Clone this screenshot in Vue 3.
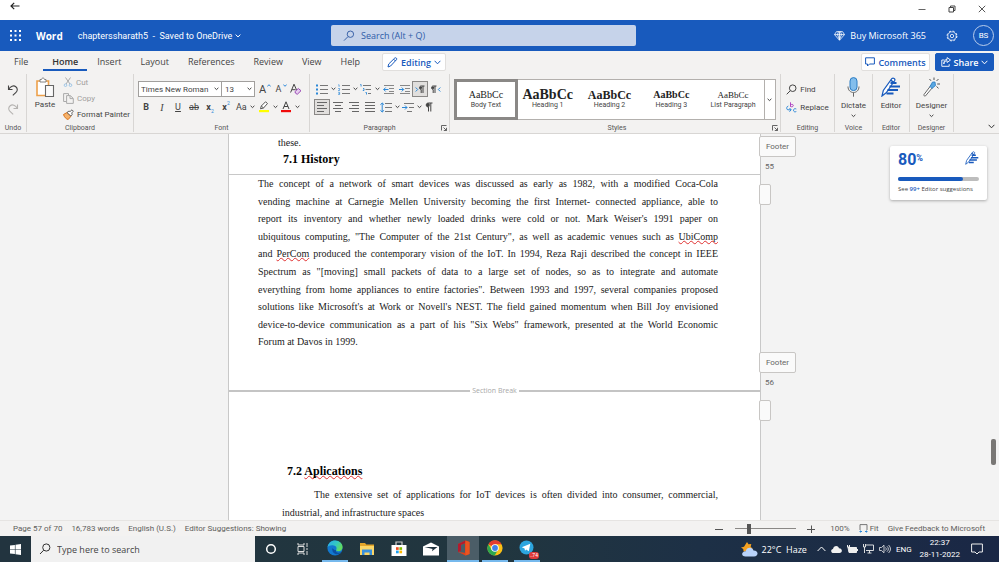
<script setup>
import { ref } from 'vue'

const tabs = ['File', 'Home', 'Insert', 'Layout', 'References', 'Review', 'View', 'Help']
const activeTab = ref('Home')
const zoom = ref(21)

const styleCards = [
  { name: 'Body Text', kind: 'plain' },
  { name: 'Heading 1', kind: 'large' },
  { name: 'Heading 2', kind: 'medium' },
  { name: 'Heading 3', kind: 'small' },
  { name: 'List Paragraph', kind: 'light' },
]
const activeStyle = ref('Body Text')

const historyLines = [
  'The concept of a network of smart devices was discussed as early as 1982, with a modified Coca-Cola',
  'vending machine at Carnegie Mellen University becoming the first Internet- connected appliance, able to',
  "report its inventory and whether newly loaded drinks were cold or not. Mark Weiser's 1991 paper on",
  'ubiquitous computing, "The Computer of the 21st Century", as well as academic venues such as |UbiComp|',
  'and |PerCom| produced the contemporary vision of the IoT. In 1994, Reza Raji described the concept in IEEE',
  'Spectrum as "[moving] small packets of data to a large set of nodes, so as to integrate and automate',
  'everything from home appliances to entire factories". Between 1993 and 1997, several companies proposed',
  "solutions like Microsoft's at Work or Novell's NEST. The field gained momentum when Bill Joy envisioned",
  'device-to-device communication as a part of his "Six Webs" framework, presented at the World Economic',
  'Forum at Davos in 1999.',
].map((line) => line.split('|'))

const pageMarks = ['55', '56']
</script>

<template>
  <div class="app">
    <div class="window-bar">
      <button class="bare" aria-label="Back">
        <svg width="10" height="8" viewBox="0 0 10 8"><path d="M9.5 4H1M4.2.8 1 4l3.200 3.200" fill="none" stroke="#222" stroke-width="1.200" /></svg>
      </button>
      <div class="window-controls">
        <button class="bare" aria-label="Minimize"><svg width="8" height="8" viewBox="0 0 8 8"><path d="M.5 4.500h7" stroke="#666" /></svg></button>
        <button class="bare" aria-label="Restore"><svg width="8" height="8" viewBox="0 0 8 8"><path d="M1 2.500h4.500V7H1zM2.500 2.500V1H7v4.500H5.500" fill="none" stroke="#444" /></svg></button>
        <button class="bare" aria-label="Close"><svg width="8" height="8" viewBox="0 0 8 8"><path d="m.8.800 6.400 6.400m0-6.400L.8 7.200" stroke="#444" stroke-width=".9" /></svg></button>
      </div>
    </div>

    <header class="title-bar">
      <div class="title-left">
        <button class="bare waffle" aria-label="App launcher">
          <svg width="11" height="11" viewBox="0 0 11 11" fill="#fff"><path d="M0 0h2v2H0zM4.500 0h2v2h-2zM9 0h2v2H9zM0 4.500h2v2H0zM4.500 4.500h2v2h-2zM9 4.500h2v2H9zM0 9h2v2H0zM4.500 9h2v2h-2zM9 9h2v2H9z" /></svg>
        </button>
        <strong class="brand">Word</strong>
        <button class="bare doc-name">chapterssharath5&nbsp; -&nbsp; Saved to OneDrive
          <svg width="6" height="4" viewBox="0 0 6 4"><path d="m.6.600 2.400 2.300L5.400.6" fill="none" stroke="#fff" /></svg>
        </button>
      </div>
      <label class="search">
        <svg width="12" height="12" viewBox="0 0 12 12"><circle cx="7.400" cy="4.200" r="3.200" fill="none" stroke="#3a62a8" /><path d="m5 6.600-4 4" stroke="#3a62a8" /></svg>
        <input type="text" placeholder="Search (Alt + Q)" aria-label="Search" />
      </label>
      <div class="title-right">
        <button class="bare buy">
          <svg width="11" height="10" viewBox="0 0 11 10"><path d="M2.500.6h6l2 3L5.500 9.300.5 3.600zM.5 3.600h10M5.500.6v8.500M3.500 3.600l2 5 2-5-1-3M3.500 3.600l1-3" fill="none" stroke="#fff" stroke-width=".8" /></svg>
          Buy Microsoft 365
        </button>
        <button class="bare" aria-label="Settings">
          <svg width="12" height="12" viewBox="0 0 12 12" fill="none" stroke="#fff"><circle cx="6" cy="6" r="4.900" stroke-width="1" stroke-dasharray="2.100 1.750" /><circle cx="6" cy="6" r="4.200" stroke-width=".7" /><circle cx="6" cy="6" r="1.700" stroke-width=".8" /></svg>
        </button>
        <button class="avatar">BS</button>
      </div>
    </header>

    <nav class="tab-row">
      <div class="tabs">
        <button v-for="t in tabs" :key="t" class="tab" :class="{ active: t === activeTab }" @click="activeTab = t">{{ t }}</button>
      </div>
      <button class="pill editing">
        <svg width="11" height="11" viewBox="0 0 11 11"><path d="M1 10l.7-3L7.800 1c1-.8 2.600.6 1.700 1.700L3.600 9zM6.700 2.200l1.800 1.800" fill="none" stroke="#185abd" /></svg>
        Editing
        <svg width="7" height="5" viewBox="0 0 7 5"><path d="m.6.800 2.900 3 2.900-3" fill="none" stroke="#185abd" /></svg>
      </button>
      <div class="tab-actions">
        <button class="pill comments">
          <svg width="10" height="10" viewBox="0 0 10 10"><path d="M.6.800h8.800v6.200H4.500L2.500 9V7H.6z" fill="none" stroke="#185abd" /></svg>
          Comments
        </button>
        <button class="pill share">
          <svg width="10" height="10" viewBox="0 0 10 10"><path d="M3.500 3H.8v6.300h7.400V7.200M2.800 7c.3-2.200 1.500-3.200 3.300-3.300V5.500L9.500 3 6.100.6v1.700C4 2.500 2.800 4.200 2.800 7z" fill="none" stroke="#fff" stroke-width=".9" /></svg>
          Share
          <svg width="7" height="5" viewBox="0 0 7 5"><path d="m.6.800 2.900 3 2.900-3" fill="none" stroke="#fff" /></svg>
        </button>
      </div>
    </nav>

    <svg class="defs" width="0" height="0" aria-hidden="true">
      <symbol id="chev" viewBox="0 0 5 4"><path d="m.6.800 1.900 1.800L4.400.8" fill="none" stroke="#444" /></symbol>
      <symbol id="launch" viewBox="0 0 6 6"><path d="M.5 5.500v-5h5M2.500 2.500l3 3m0-2.700v2.700H2.800" fill="none" stroke="#555" stroke-width=".9" /></symbol>
      <symbol id="pen-lines" viewBox="0 0 20 20"><path d="M1 19l1.300-5.500L11 1.500c1.200-1.200 3.600.4 2.700 2L5.200 15.800z" fill="#fff" stroke="#185abd" stroke-width="1.200" /><path d="M9.500 6h6M8.500 9.500H19M6.500 13H17M5.500 16.500h7" stroke="#185abd" stroke-width="2.200" /><path d="M9.500 3.200l3.800 2.500" stroke="#185abd" stroke-width="1.500" /></symbol>
    </svg>

    <section class="ribbon" aria-label="Ribbon">
      <div class="group undo">
        <div class="stack">
          <button class="tool" aria-label="Undo"><svg width="12" height="12" viewBox="0 0 12 12"><path d="M1.500 1.500v4h4M1.700 5.300C3.500 2.500 6.500.9 8.800 2.700c2.200 1.800 1.700 4.200.2 5.600L5.800 11.300" fill="none" stroke="#444" stroke-width="1.100" /></svg></button>
          <button class="tool" aria-label="Redo"><svg width="12" height="12" viewBox="0 0 12 12"><path d="M10.500 1.500v4h-4M10.300 5.300C8.500 2.500 5.500.9 3.200 2.700 1 4.500 1.500 6.900 3 8.300l3.200 3" fill="none" stroke="#b5b3b1" stroke-width="1.100" /></svg></button>
        </div>
        <span class="group-label">Undo</span>
      </div>

      <div class="group clipboard">
        <div class="group-body">
          <button class="big">
            <svg width="20" height="22" viewBox="0 0 20 22"><path d="M2 4h11.500v14.500H2z" fill="#fff" stroke="#eda04a" stroke-width="1.600" /><path d="M5 2.500h1.500C6.800.5 9.200.5 9.500 2.500H11V5H5z" fill="#fff" stroke="#777" stroke-width=".9" /><path d="M10.500 8.500h8v11h-8z" fill="#fafafa" stroke="#666" stroke-width="1.100" /></svg>
            Paste
          </button>
          <div class="clip-list">
            <button class="text-tool faded"><svg width="10" height="10" viewBox="0 0 10 10"><path d="M2.500.5 7 7M7.500.5 3 7" stroke="#aaa" fill="none" /><circle cx="2.500" cy="8.200" r="1.300" fill="none" stroke="#9cc4e6" /><circle cx="7.500" cy="8.200" r="1.300" fill="none" stroke="#9cc4e6" /></svg>Cut</button>
            <button class="text-tool faded"><svg width="11" height="11" viewBox="0 0 11 11"><path d="M3.500 8.500H.6V.6h4.900v1.800M3.600 2.600h3.700l3 2.800v5H3.600zM7 2.800v2.800h3" fill="none" stroke="#aaa" /></svg>Copy</button>
            <button class="text-tool"><svg width="11" height="11" viewBox="0 0 11 11"><path d="M.5 5.500 4 3.500l4 3.700L5.200 10.500c-2-.3-4-2.500-4.700-5z" fill="#f6b26b" stroke="#d8741c" /><path d="M4 3.500 6 2l1 .6L9 .8l1.300 1.400L8.700 4l.5 1.400-1.300 1.700z" fill="#fff" stroke="#555" stroke-width=".9" /></svg>Format Painter</button>
          </div>
        </div>
        <span class="group-label">Clipboard</span>
      </div>

      <div class="group font">
        <div class="rows">
          <div class="row">
            <span class="combo wide"><select aria-label="Font"><option>Times New Roman</option></select><svg width="5" height="4"><use href="#chev" /></svg></span>
            <span class="combo narrow"><select aria-label="Font size"><option>13</option></select><svg width="5" height="4"><use href="#chev" /></svg></span>
            <div class="row sizes">
              <button class="tool" aria-label="Grow font"><span class="letter big-a">A</span><svg class="sup" width="4" height="3" viewBox="0 0 4 3"><path d="M.3 2.500 2 .7l1.700 1.800" fill="none" stroke="#2b88d8" /></svg></button>
              <button class="tool" aria-label="Shrink font"><span class="letter">A</span><svg class="sup" width="4" height="3" viewBox="0 0 4 3"><path d="M.3.500 2 2.300 3.700.5" fill="none" stroke="#2b88d8" /></svg></button>
              <button class="tool" aria-label="Clear formatting"><svg width="12" height="12" viewBox="0 0 12 12"><path d="M.6 9.500 4 1.200l2.700 6M1.800 6.700h3.800" fill="none" stroke="#444" /><path d="m4.800 8.800 3.500-3.300 2.700 2.200-3.500 3.400h-1z" fill="#e6cdef" stroke="#9a4bb5" /></svg></button>
            </div>
          </div>
          <div class="row">
            <button class="tool"><b>B</b></button>
            <button class="tool"><i class="serif">I</i></button>
            <button class="tool"><u>U</u></button>
            <button class="tool"><s>ab</s></button>
            <button class="tool"><b>x</b><span class="tiny low">2</span></button>
            <button class="tool"><b>x</b><span class="tiny high">2</span></button>
            <button class="tool drop">Aa<svg width="5" height="4"><use href="#chev" /></svg></button>
            <button class="tool drop" aria-label="Highlight colour"><svg width="12" height="12" viewBox="0 0 12 12"><path d="M2.500 7.800 3.300 5 7.500.8l2 1.700L5.500 7zM3.300 5l2.200 2" fill="#fff" stroke="#555" /><path d="M1 9h10v2.200H1z" fill="#ff0" /></svg><svg width="5" height="4"><use href="#chev" /></svg></button>
            <button class="tool drop" aria-label="Font colour"><svg width="12" height="12" viewBox="0 0 12 12"><path d="M3 8 6 .8 9 8M4 5.500h4" fill="none" stroke="#444" /><path d="M1 9h10v2.200H1z" fill="#f00b0b" /></svg><svg width="5" height="4"><use href="#chev" /></svg></button>
          </div>
        </div>
        <span class="group-label">Font</span>
      </div>

      <div class="group paragraph">
        <div class="rows">
          <div class="row">
            <button class="tool drop" aria-label="Bullets"><svg width="12" height="11" viewBox="0 0 12 11"><path d="M4 1.500h8M4 5.500h8M4 9.500h8" stroke="#777" /><path d="M0 .5h2v2H0zM0 4.500h2v2H0zM0 8.500h2v2H0z" fill="#2b88d8" /></svg><svg width="5" height="4"><use href="#chev" /></svg></button>
            <button class="tool drop" aria-label="Numbering"><svg width="12" height="11" viewBox="0 0 12 11"><path d="M4 1.500h8M4 5.500h8M4 9.500h8" stroke="#777" /><path d="M.3.800h.8v2M.2 4.500h1.400v1L.4 6.500h1.400M.2 8.300h1.400v2.200H.2m.3-1.100h1" fill="none" stroke="#2b88d8" stroke-width=".7" /></svg><svg width="5" height="4"><use href="#chev" /></svg></button>
            <button class="tool drop" aria-label="Multilevel list"><svg width="12" height="11" viewBox="0 0 12 11"><path d="M3 1.500h8M5.500 5.500H11M8 9.500h3" stroke="#777" /><path d="M.3.500h.8v2M3 4.500h1v2H2.800M5.500 8.500h1v2" fill="none" stroke="#2b88d8" stroke-width=".9" /></svg><svg width="5" height="4"><use href="#chev" /></svg></button>
            <button class="tool" aria-label="Decrease indent"><svg width="11" height="11" viewBox="0 0 11 11"><path d="M1 1.500h10M6 4.500h5M6 7.500h5M1 9.500h10" stroke="#888" /><path d="M5.500 5.500H.7m2-2-2 2 2 2" fill="none" stroke="#2b88d8" /></svg></button>
            <button class="tool" aria-label="Increase indent"><svg width="11" height="11" viewBox="0 0 11 11"><path d="M1 1.500h10M6 4.500h5M6 7.500h5M1 9.500h10" stroke="#888" /><path d="M0 5.500h4.700m-2-2 2 2-2 2" fill="none" stroke="#2b88d8" /></svg></button>
            <button class="tool on" aria-label="Left to right"><svg width="10" height="9" viewBox="0 0 10 9"><path d="m.7 2.500 2 2-2 2" fill="none" stroke="#2b88d8" /><path d="M9.500 1H6.200C4 1 4 4.500 6.200 4.500V8M8 1v7" fill="none" stroke="#444" /><circle cx="5.800" cy="2.700" r="1.300" fill="#444" /></svg></button>
            <button class="tool" aria-label="Right to left"><svg width="10" height="9" viewBox="0 0 10 9"><path d="m9.300 2.500-2 2 2 2" fill="none" stroke="#2b88d8" /><path d="M5.500 1H2.200C0 1 0 4.500 2.200 4.500V8M4 1v7" fill="none" stroke="#444" /><circle cx="2" cy="2.700" r="1.300" fill="#444" /></svg></button>
          </div>
          <div class="row">
            <button class="tool on" aria-label="Align left"><svg width="10" height="10" viewBox="0 0 10 10"><path d="M0 .5h10M0 3.500h7M0 6.500h10M0 9.500h7" stroke="#666" /></svg></button>
            <button class="tool" aria-label="Centre"><svg width="10" height="10" viewBox="0 0 10 10"><path d="M0 .5h10M2 3.500h6M0 6.500h10M2 9.500h6" stroke="#666" /></svg></button>
            <button class="tool" aria-label="Align right"><svg width="10" height="10" viewBox="0 0 10 10"><path d="M0 .5h10M3 3.500h7M0 6.500h10M3 9.500h7" stroke="#666" /></svg></button>
            <button class="tool" aria-label="Justify"><svg width="10" height="10" viewBox="0 0 10 10"><path d="M0 .5h10M0 3.500h10M0 6.500h10M0 9.500h10" stroke="#666" /></svg></button>
            <button class="tool drop" aria-label="Line spacing"><svg width="12" height="11" viewBox="0 0 12 11"><path d="M5 1.500h7M5 5.500h7M5 9.500h7" stroke="#777" /><path d="M2.200 1v9M.4 2.700 2.200 1 4 2.700M.4 8.300 2.200 10 4 8.300" fill="none" stroke="#2b88d8" /></svg><svg width="5" height="4"><use href="#chev" /></svg></button>
            <button class="tool drop" aria-label="Special indent"><svg width="12" height="11" viewBox="0 0 12 11"><path d="M2 1.500h10M7 5.500h5M5 9.500h5" stroke="#777" /><path d="M0 5.500h5m-2-2 2 2-2 2" fill="none" stroke="#2b88d8" /></svg><svg width="5" height="4"><use href="#chev" /></svg></button>
            <button class="tool slim" aria-label="Show marks"><svg width="8" height="10" viewBox="0 0 8 10"><path d="M7.500 1H3.500C.5 1 .5 5 3.500 5v4.500M5.800 1v8.500" fill="none" stroke="#444" /><circle cx="3" cy="3" r="1.900" fill="#444" /></svg></button>
          </div>
        </div>
        <span class="group-label">Paragraph</span>
        <button class="launcher" aria-label="Paragraph settings"><svg width="6" height="6"><use href="#launch" /></svg></button>
      </div>

      <div class="group styles">
        <div class="gallery">
          <button v-for="s in styleCards" :key="s.name" class="style-card" :class="[s.kind, { chosen: s.name === activeStyle }]" @click="activeStyle = s.name">
            <span class="sample">AaBbCc</span>
            <span class="style-name">{{ s.name }}</span>
          </button>
          <button class="more" aria-label="More styles"><svg width="5" height="4"><use href="#chev" /></svg></button>
        </div>
        <span class="group-label">Styles</span>
        <button class="launcher" aria-label="Style settings"><svg width="6" height="6"><use href="#launch" /></svg></button>
      </div>

      <div class="group find">
        <div class="stack">
          <button class="text-tool"><svg width="11" height="11" viewBox="0 0 11 11"><circle cx="6.700" cy="4.200" r="3.300" fill="none" stroke="#444" /><path d="M4.300 6.700.7 10.300" stroke="#444" /></svg>Find</button>
          <button class="text-tool"><svg width="11" height="11" viewBox="0 0 11 11" fill="none"><path d="M4.500.3v4.500M4.500 3c1-1 2.800-.7 2.800.5s-1.800 1.700-2.800.8" stroke="#b146c2" /><path d="M10.300 7c-1.500-.8-2.800 0-2.800 1.300s1.300 2 2.800 1.200M2.300 4C.3 4.500.2 7.800 2 7.800h3M3.500 6l1.700 1.800-1.700 1.900" stroke="#2b88d8" /></svg>Replace</button>
        </div>
        <span class="group-label">Editing</span>
      </div>

      <div class="group voice">
        <button class="big"><svg width="13" height="20" viewBox="0 0 13 20"><rect x="3" y=".6" width="7" height="13" rx="3.500" fill="#83beec" stroke="#2b7cc4" /><path d="M1 9.500c0 8 11 8 11 0M6.500 15.700v4" fill="none" stroke="#666" /></svg>Dictate<svg class="under" width="5" height="4"><use href="#chev" /></svg></button>
        <span class="group-label">Voice</span>
      </div>
      <div class="group editor">
        <button class="big"><svg width="20" height="20"><use href="#pen-lines" /></svg>Editor</button>
        <span class="group-label">Editor</span>
      </div>
      <div class="group designer">
        <button class="big"><svg width="17" height="20" viewBox="0 0 17 20"><path d="m1 17.500 8-10.500 2 1.700-8.500 10.200c-1 .6-2-.4-1.500-1.400z" fill="#fff" stroke="#555" stroke-width=".9" /><path d="M7 9.500 9.500 5l2.500 0 .5 3.500L9 11.500z" fill="#5aa7e0" stroke="#2b7cc4" stroke-width=".8" /><path d="M11 .5v2.500M6.500 2l1.500 1.800M15.500 2l-2 2M14.200 7H17M13.500 9.500l2 1.800" stroke="#555" /></svg>Designer<svg class="under" width="5" height="4"><use href="#chev" /></svg></button>
        <span class="group-label">Designer</span>
      </div>
      <div class="collapse"><button class="bare" aria-label="Collapse ribbon"><svg width="7" height="5" viewBox="0 0 7 5"><path d="m.6.800 2.900 3 2.900-3" fill="none" stroke="#333" /></svg></button></div>
    </section>

    <main class="canvas">
      <div class="desk">
        <article class="page">
          <p class="tail">these.</p>
          <h2 class="heading first">7.1 History</h2>
          <div class="body-lines">
            <p v-for="(parts, i) in historyLines" :key="i" :class="{ full: i < 9 }"><template v-for="(part, j) in parts" :key="j"><span :class="{ typo: j % 2 === 1 }">{{ part }}</span></template></p>
          </div>
          <div class="break">Section Break</div>
          <h2 class="heading second">7.2 <span class="typo">Aplications</span></h2>
          <div class="apps">
            <p class="indent full">The extensive set of applications for IoT devices is often divided into consumer, commercial,</p>
            <p>industrial, and infrastructure spaces</p>
          </div>
        </article>
        <aside class="marks">
          <div v-for="n in pageMarks" :key="n" class="mark">
            <button class="tag">Footer</button>
            <span class="number">{{ n }}</span>
            <button class="tag stub" :aria-label="'Header after page ' + n"></button>
          </div>
        </aside>
      </div>
      <div class="scroller"><div class="thumb"></div></div>

      <section class="score">
        <div class="score-top">
          <div class="score-value"><strong>80</strong><b>%</b></div>
          <svg width="14" height="14"><use href="#pen-lines" /></svg>
        </div>
        <div class="meter"><div class="fill" :style="{ width: '80%' }"></div></div>
        <span class="hint">See <a href="#">99+</a> Editor suggestions</span>
      </section>
    </main>

    <footer class="status">
      <span class="pages">Page 57 of 70</span>
      <span>16,783 words</span>
      <span>English (U.S.)</span>
      <span>Editor Suggestions: Showing</span>
      <div class="status-right">
        <button class="bare" aria-label="Zoom out"><svg width="8" height="8" viewBox="0 0 8 8"><path d="M0 4.500h8" stroke="#555" /></svg></button>
        <input v-model="zoom" class="zoom" type="range" min="0" max="100" aria-label="Zoom" />
        <button class="bare" aria-label="Zoom in"><svg width="8" height="8" viewBox="0 0 8 8"><path d="M0 4.500h8M4.500.5v8" stroke="#555" /></svg></button>
        <span class="percent">100%</span>
        <button class="bare fit"><svg width="9" height="9" viewBox="0 0 9 9"><path d="M1 6V.6h7V6" fill="none" stroke="#777" /><path d="M.5 7.500h2.500M6 7.500h2.500M1.500 6.500v2M7.500 6.500v2" stroke="#2b88d8" /></svg>Fit</button>
        <a class="feedback" href="#">Give Feedback to Microsoft</a>
      </div>
    </footer>

    <div class="taskbar">
      <button class="start" aria-label="Start"><svg width="11" height="11" viewBox="0 0 11 11"><path d="M0 1.600 4.900.9v4.300H0zM5.500.8 11 0v5.200H5.500zM0 5.800h4.900v4.300L0 9.400zM5.500 5.800H11V11l-5.500-.8z" fill="#fff" /></svg></button>
      <label class="task-search">
        <svg width="12" height="12" viewBox="0 0 12 12"><circle cx="7.300" cy="4.500" r="3.600" fill="none" stroke="#333" /><path d="M4.700 7.200 1 11" stroke="#333" /></svg>
        <input type="text" placeholder="Type here to search" aria-label="Type here to search" />
      </label>
      <div class="apps-row">
        <button aria-label="Cortana"><svg width="12" height="12" viewBox="0 0 12 12"><circle cx="6" cy="6" r="4.300" fill="none" stroke="#fff" stroke-width="1.500" /></svg></button>
        <button aria-label="Task view"><svg width="12" height="12" viewBox="0 0 12 12"><path d="M1 0v2h6V0M1 12v-2h6v2M1 3.500h6v5H1zM10 0v4M10 8v4M9 6h2" fill="none" stroke="#ddd" /></svg></button>
        <button class="open" aria-label="Edge">
          <svg width="16" height="16" viewBox="0 0 16 16"><defs><linearGradient id="eg" x1="0" y1="0" x2="1" y2=".5"><stop offset="0" stop-color="#2aa9ee" /><stop offset=".6" stop-color="#34c9c0" /><stop offset="1" stop-color="#62dc5c" /></linearGradient></defs><circle cx="8" cy="8" r="7.600" fill="#1278cf" /><path d="M.5 7.500C1 3 4.300.4 8 .4c4.500 0 7.600 3.100 7.600 6.600 0 2.800-2 4.200-4.200 4.200-2 0-2.600-.8-2.200-1.500.6-1 .8-3.700-2.500-4.200C3.500 5 1.200 6 .5 7.500z" fill="url(#eg)" /><path d="M5.500 8c-1 4 2 6.500 5 6.300 2-.1 3.500-1.200 4.200-2.300-3 1.500-7 .5-5.500-2.300-1 .8-2.500.3-3.700-1.700z" fill="#0d4fa0" /></svg>
        </button>
        <button aria-label="Files"><svg width="16" height="14" viewBox="0 0 16 14"><path d="M1 1h5l1.300 1.500H15V13H1z" fill="#e3a52a" /><path d="M1 4h14v9H1z" fill="#fbd667" /><path d="M3 13V7.500h10V13h-2.500v-2.500h-5V13z" fill="#3a91dd" /></svg></button>
        <button aria-label="Store"><svg width="16" height="16" viewBox="0 0 16 16"><path d="M5 4.500V1h6v3.500" fill="none" stroke="#ccc" stroke-width="1.200" /><path d="M.5 4h15v11h-15z" fill="#fff" /><path d="M5 6.200h2.700v2.700H5z" fill="#f04e23" /><path d="M8.400 6.200h2.700v2.700H8.400z" fill="#7fba00" /><path d="M5 9.600h2.700v2.700H5z" fill="#1da1f2" /><path d="M8.400 9.600h2.700v2.700H8.400z" fill="#ffb900" /></svg></button>
        <button aria-label="Mail"><svg width="16" height="14" viewBox="0 0 16 14"><path d="M0 4.500 8 .5l8 4v9H0z" fill="#fff" /><path d="M1.500 5h13L9 9.300 9.500 7z" fill="#22343f" /></svg></button>
        <button class="current" aria-label="Office"><svg width="13" height="16" viewBox="0 0 13 16"><path d="M1 4 8.500.5 12.500 2v12l-4 1.500L1 12l7 .8V3.300L4 4.700v6L1 12z" fill="#e0421b" /><path d="M1 4 8.500.5 8 3.300 4 4.700v6L1 12z" fill="#b31a2e" /><path d="M8.500.5 12.500 2v12l-4 1.500z" fill="#ea5421" /></svg></button>
        <button class="open" aria-label="Chrome"><svg width="16" height="16" viewBox="0 0 16 16"><circle cx="8" cy="8" r="7.600" fill="#fbc116" /><path d="M8 8 1.400 4.200A7.600 7.600 0 0 1 14.600 4.200H8z" fill="#e33b2e" /><path d="M1.400 4.200A7.600 7.600 0 0 0 7.700 15.600L11 9.800 8 8 4.700 9.900z" fill="#2da94f" /><circle cx="8" cy="8" r="3.800" fill="#fff" /><circle cx="8" cy="8" r="2.900" fill="#3f7fe8" /></svg></button>
        <button class="open" aria-label="Telegram"><svg width="16" height="16" viewBox="0 0 16 16"><circle cx="7.500" cy="7.500" r="7" fill="#2ca5df" /><path d="m2.800 7.300 8.500-3.500-1.500 7.500-2.600-1.900-1.200 1.400-.4-2.300z" fill="#fff" /></svg><span class="badge">..74</span></button>
      </div>
      <div class="tray">
        <button class="bare weather">
          <svg width="17" height="15" viewBox="0 0 17 15"><path d="M6 0l1.500 2.300 2.800-.3-.6 2.700 2 2-9 3L2.200 7 0 5.500 3 4.700z" fill="#f3a020" /><path d="M4.500 14.500c-4.500 0-4.500-5 .2-5.200.8-4.500 6.800-4.500 7.800-.8 5.300-.2 5.300 6 .5 6z" fill="#b9d3fa" /></svg>
          <span>22°C&nbsp; Haze</span>
        </button>
        <button class="bare" aria-label="Hidden icons"><svg width="9" height="6" viewBox="0 0 9 6"><path d="m.6 5 3.900-4 3.900 4" fill="none" stroke="#fff" /></svg></button>
        <button class="bare" aria-label="OneDrive"><svg width="11" height="7" viewBox="0 0 11 7"><path d="M2.500 7C-.5 7-.5 3.200 2 3 2.500-.5 7-1 8 2.200c3.500 0 4 4.800.5 4.800z" fill="#f1f1f1" /></svg></button>
        <button class="bare" aria-label="Battery"><svg width="11" height="8" viewBox="0 0 11 8"><path d="M1 2.500h8.500v5H2zM10.500 4v2" fill="#eee" stroke="#eee" /><path d="M.5 0v2M2.500 0v2M0 2h3v2" stroke="#eee" fill="none" /></svg></button>
        <button class="bare" aria-label="Network"><svg width="11" height="10" viewBox="0 0 11 10"><path d="M3 1h7.500v5.500H3M6.500 6.500V9M4.500 9h4M.5 0v3h2V0M1.500 3v6" fill="none" stroke="#eee" stroke-width=".9" /></svg></button>
        <button class="bare" aria-label="Volume"><svg width="12" height="10" viewBox="0 0 12 10"><path d="M.5 3.500h2L5 1.200v7.600L2.500 6.500h-2zM6.500 3.500c1 1 1 2 0 3M8 2.300c1.800 1.800 1.800 3.600 0 5.400M9.500 1c2.600 2.600 2.600 5.400 0 8" fill="none" stroke="#eee" stroke-width=".8" /></svg></button>
        <span>ENG</span>
        <div class="clock"><span>22:37</span><span>28-11-2022</span></div>
        <button class="bare" aria-label="Notifications"><svg width="12" height="12" viewBox="0 0 12 12"><path d="M.6 1h10.800v8H8l-2 2-2-2H.6z" fill="none" stroke="#eee" /></svg></button>
      </div>
    </div>
  </div>
</template>

<style>
body {
  margin: 0;
}
</style>

<style scoped>
.app {
  display: flex;
  flex-direction: column;
  height: 100vh;
  overflow: hidden;
  font-family: Roboto, "Noto Sans", sans-serif;
  font-size: 8px;
  color: #444;
  background: #f3f2f1;
}
* {
  box-sizing: border-box;
}
button,
input,
select {
  font: inherit;
  color: inherit;
  margin: 0;
}
button {
  padding: 0;
  border: 0;
  background: none;
  white-space: nowrap;
}
svg {
  display: block;
  flex: none;
}
.defs {
  position: absolute;
}
.bare {
  display: flex;
  align-items: center;
}
a {
  color: inherit;
  text-decoration: none;
}

/* window chrome */
.window-bar {
  display: flex;
  justify-content: space-between;
  align-items: flex-start;
  height: 20px;
  padding: 2px 13px 0 10px;
  background: #fff;
}
.window-controls {
  display: flex;
  gap: 22px;
  padding-top: 3px;
}
.title-bar {
  display: grid;
  grid-template-columns: 331fr 305fr 363fr;
  align-items: center;
  height: 31px;
  color: #fff;
  background: #185abd;
}
.title-left {
  display: flex;
  align-items: center;
  padding-left: 10px;
}
.brand {
  margin: 0 15px;
  font-family: "Open Sans", sans-serif;
  font-size: 10px;
}
.doc-name {
  gap: 3px;
  font-size: 9px;
}
.search {
  display: flex;
  align-items: center;
  gap: 6px;
  height: 21px;
  padding-left: 12px;
  border-radius: 2px;
  background: #c6d3ea;
}
.search input,
.task-search input {
  flex: 1;
  min-width: 0;
  padding: 0;
  border: 0;
  outline: 0;
  background: none;
  font-family: "Open Sans", sans-serif;
  font-size: 9px;
}
.search input::placeholder {
  color: #2f5ca8;
  opacity: 1;
}
.title-right {
  display: flex;
  justify-content: flex-end;
  align-items: center;
  gap: 15px;
  padding-right: 5px;
}
.buy {
  gap: 5px;
  margin-right: 5px;
  font-family: "Open Sans", sans-serif;
  font-size: 9px;
}
.avatar {
  width: 21px;
  height: 21px;
  border: 1px solid #b9cdec;
  border-radius: 50%;
}

/* tabs */
.tab-row {
  display: flex;
  align-items: flex-start;
  height: 23px;
  padding: 2px 5px 0;
  font-family: "Open Sans", sans-serif;
}
.tabs {
  display: flex;
  gap: 1px;
}
.tab {
  height: 18px;
  padding: 0 9px;
  border-bottom: 2px solid transparent;
  font-size: 9px;
}
.tab.active {
  margin-left: 5px;
  border-color: #185abd;
  font-weight: 600;
  color: #333;
}
.pill {
  display: flex;
  align-items: center;
  justify-content: center;
  gap: 3px;
  height: 18px;
  border: 1px solid #e1dfdd;
  border-radius: 2px;
  background: #fff;
  color: #185abd;
  font-size: 9px;
  font-weight: 600;
}
.editing {
  width: 64px;
  margin-left: 13px;
}
.tab-actions {
  display: flex;
  gap: 5px;
  margin-left: auto;
}
.comments {
  width: 69px;
}
.share {
  width: 59px;
  border-color: #185abd;
  background: #185abd;
  color: #fff;
}

/* ribbon */
.ribbon {
  display: flex;
  height: 60px;
  padding-bottom: 1px;
  border-bottom: 1px solid #d8d6d4;
}
.group {
  position: relative;
  display: flex;
  flex-direction: column;
  align-items: center;
  justify-content: space-between;
  flex: none;
  border-right: 1px solid #d8d6d4;
}
.group-label {
  font-size: 7px;
  line-height: 8px;
  color: #555;
}
.launcher {
  position: absolute;
  right: 2px;
  bottom: 1px;
}
.undo {
  width: 27px;
}
.clipboard {
  width: 107px;
}
.font {
  width: 176px;
}
.paragraph {
  width: 140px;
}
.styles {
  flex: 1;
  align-items: stretch;
  padding-left: 4px;
}
.styles .group-label {
  align-self: center;
}
.find {
  width: 54px;
}
.voice {
  width: 38px;
}
.editor {
  width: 37px;
}
.designer {
  width: 44px;
}
.collapse {
  display: flex;
  align-items: flex-end;
  justify-content: flex-end;
  width: 45px;
  padding: 0 4px 3px 0;
}
.stack {
  display: flex;
  flex-direction: column;
  align-items: flex-start;
  gap: 2px;
  padding-top: 7px;
}
.group-body {
  display: flex;
  align-self: stretch;
  padding-left: 6px;
  gap: 6px;
}
.big {
  display: flex;
  flex-direction: column;
  align-items: center;
  padding-top: 3px;
  line-height: 12px;
}
.big > svg:first-child {
  margin-bottom: 3px;
}
.big .under {
  margin-top: 2px;
}
.clipboard .big {
  width: 24px;
}
.clipboard .big > svg:first-child {
  margin-bottom: 0;
}
.clip-list {
  display: flex;
  flex-direction: column;
  align-items: flex-start;
}
.text-tool {
  display: flex;
  align-items: center;
  gap: 3px;
  height: 16px;
}
.faded {
  color: #a19f9d;
}
.rows {
  display: flex;
  flex-direction: column;
  gap: 2px;
  align-self: stretch;
  padding: 7px 0 0 4px;
}
.row {
  display: flex;
  align-items: center;
}
.sizes {
  padding-left: 1px;
}
.tool {
  position: relative;
  display: flex;
  align-items: center;
  justify-content: center;
  width: 16px;
  height: 16px;
}
.stack .tool {
  height: 17px;
}
.font .tool {
  font-size: 9px;
}
.slim {
  width: 14px;
}
.drop {
  width: 22px;
  justify-content: flex-start;
  gap: 3px;
  padding-left: 2px;
}
.on {
  border: 1px solid #8a8886;
  background: #e1dfdd;
}
.combo {
  position: relative;
  display: flex;
  align-items: center;
  justify-content: flex-end;
  height: 16px;
  padding-right: 2px;
  border: 1px solid #a19f9d;
  background: #fff;
}
.combo select {
  position: absolute;
  inset: 0;
  width: 100%;
  padding: 0 0 0 2px;
  border: 0;
  appearance: none;
  background: none;
}
.wide {
  width: 84px;
}
.narrow {
  width: 34px;
  margin-left: -1px;
}
.narrow select {
  padding-left: 3px;
}
.letter {
  padding-right: 3px;
}
.big-a {
  font-size: 11px;
}
.sup {
  position: absolute;
  top: 3px;
  right: 1px;
}
.serif {
  font-family: "Liberation Serif", serif;
  font-size: 10px;
}
.tiny {
  font-size: 5px;
  line-height: 8px;
  color: #2b88d8;
}
.low {
  align-self: flex-end;
}
.high {
  align-self: flex-start;
}
.gallery {
  display: flex;
  height: 41px;
  margin: 5px 4px 0 0;
  border: 1px solid #b3b0ad;
  background: #fff;
}
.style-card {
  display: flex;
  flex: 1;
  flex-direction: column;
  align-items: center;
  justify-content: center;
  min-width: 0;
  border: 2px solid transparent;
  font-size: 7px;
}
.style-card.chosen {
  margin: -1px;
  border: 3px solid #8a8886;
}
.sample {
  font-family: "Liberation Serif", serif;
  font-size: 10px;
  line-height: 12px;
  color: #222;
}
.style-name {
  line-height: 9px;
}
.large .sample {
  font-size: 14px;
  font-weight: 700;
}
.medium .sample {
  font-size: 12px;
  font-weight: 700;
}
.small .sample {
  font-size: 10px;
  font-weight: 700;
}
.light .sample {
  font-size: 9px;
}
.more {
  display: flex;
  align-items: center;
  justify-content: center;
  width: 11px;
  border-left: 1px solid #b3b0ad;
}

/* document */
.canvas {
  position: relative;
  display: flex;
  flex: 1;
  min-height: 0;
  background: #f3f3f3;
}
.desk {
  display: grid;
  grid-template-columns: 1fr minmax(0, 533px) 1fr;
  flex: 1;
  overflow: hidden;
}
.page {
  grid-column: 2;
  border: 1px solid #c8c8c8;
  border-width: 0 1px;
  background: #fff;
  font-family: "Liberation Serif", serif;
  font-size: 10px;
  line-height: 17px;
  color: #222;
}
.page p,
.heading {
  margin: 0;
}
.tail {
  padding-left: 49px;
}
.heading {
  font-size: 12px;
  line-height: 17px;
  color: #000;
}
.first {
  padding: 0 0 6px 54px;
  border-bottom: 1px solid #c8c8c8;
}
.second {
  padding-left: 58px;
}
.body-lines {
  display: flex;
  flex-direction: column;
  height: 176px;
  padding: 0 42px 0 29px;
}
.body-lines p {
  flex: 1;
}
.full {
  text-align: justify;
  text-align-last: justify;
}
.typo {
  text-decoration: underline wavy #e03030 1px;
  text-decoration-skip-ink: none;
  text-underline-offset: 0;
}
.break {
  display: flex;
  align-items: center;
  gap: 2px;
  margin: 31px 0 64px;
  font-family: "Open Sans", sans-serif;
  font-size: 7px;
  color: #a8a8a8;
}
.break::before,
.break::after {
  content: "";
  flex: 1;
  height: 2px;
  background: #c4c4c4;
}
.apps {
  padding: 6px 42px 0 53px;
  line-height: 18px;
}
.indent {
  padding-left: 32px;
}
.marks {
  display: flex;
  flex-direction: column;
  padding-top: 2px;
  margin-left: -2px;
  color: #666;
}
.mark {
  display: flex;
  flex-direction: column;
  align-items: flex-start;
  height: 216px;
  flex: none;
}
.tag {
  width: 37px;
  height: 21px;
  border: 1px solid #c8c6c4;
  border-radius: 2px;
  background: #fafafa;
}
.stub {
  width: 12px;
}
.number {
  padding-left: 6px;
  line-height: 20px;
  margin-bottom: 7px;
}
.scroller {
  width: 10px;
  padding: 305px 3px 0 2px;
}
.thumb {
  height: 26px;
  border-radius: 2px;
  background: #797775;
}
.score {
  position: absolute;
  top: 12px;
  right: 12px;
  width: 97px;
  padding: 5px 8px 6px;
  border-radius: 2px;
  background: #fff;
  box-shadow: 0 1px 3px rgba(0, 0, 0, 0.3);
}
.score-top {
  display: flex;
  justify-content: space-between;
  align-items: flex-start;
  height: 26px;
  color: #185abd;
}
.score-value {
  display: flex;
  align-items: flex-start;
}
.score-value strong {
  font-size: 16px;
  line-height: 18px;
}
.score-value b {
  font-size: 9px;
  line-height: 14px;
}
.meter {
  height: 4px;
  border-radius: 2px;
  background: #bdbdbd;
}
.fill {
  height: 4px;
  border-radius: 2px;
  background: #185abd;
}
.hint {
  display: block;
  margin-top: 3px;
  font-family: "Open Sans", sans-serif;
  font-size: 6px;
  line-height: 10px;
  white-space: nowrap;
}
.hint a {
  color: #185abd;
  font-weight: 600;
}

/* status bar */
.status {
  display: flex;
  align-items: center;
  gap: 9px;
  height: 16px;
  padding: 0 14px 0 13px;
  border-top: 1px solid #e6e4e2;
  background: #f3f2f1;
  color: #605e5c;
  white-space: nowrap;
}
.status-right {
  display: flex;
  align-items: center;
  margin-left: auto;
}
.zoom {
  appearance: none;
  width: 61px;
  height: 12px;
  margin: 0 11px 0 12px;
  background: linear-gradient(#8a8886, #8a8886) center / 100% 1px no-repeat;
}
.zoom::-webkit-slider-thumb {
  appearance: none;
  width: 4px;
  height: 10px;
  background: #555;
}
.percent {
  margin-left: 15px;
}
.fit {
  gap: 2px;
  margin: 0 9px;
}

/* taskbar */
.taskbar {
  display: flex;
  align-items: stretch;
  height: 26px;
  color: #fff;
  background: linear-gradient(90deg, #22343f 0%, #21363f 50%, #1d3046 70%, #1a2745 100%);
}
.start {
  display: flex;
  align-items: center;
  justify-content: center;
  width: 31px;
}
.task-search {
  display: flex;
  align-items: center;
  gap: 6px;
  width: 224px;
  padding-left: 8px;
  background: #f1f1f1;
}
.task-search input::placeholder {
  color: #444;
  opacity: 1;
}
.apps-row {
  display: flex;
}
.apps-row button {
  position: relative;
  display: flex;
  align-items: center;
  justify-content: center;
  width: 32px;
}
.apps-row .open {
  width: 26px;
  margin: 0 3px;
  border-bottom: 2px solid #76b9ed;
}
.apps-row .current {
  border-bottom: 2px solid #76b9ed;
  background: #4b5d67;
}
.badge {
  position: absolute;
  right: 1px;
  bottom: 1px;
  padding: 0 1px;
  border-radius: 3px;
  background: #e03a3a;
  font-size: 5px;
  line-height: 7px;
}
.tray {
  display: flex;
  align-items: center;
  gap: 5px;
  margin-left: auto;
  padding-right: 16px;
}
.weather {
  gap: 4px;
  margin-right: 5px;
  font-family: "Open Sans", sans-serif;
  font-size: 9px;
}
.clock {
  display: flex;
  flex-direction: column;
  align-items: center;
  margin: 0 6px 0 3px;
  line-height: 12px;
}
</style>
